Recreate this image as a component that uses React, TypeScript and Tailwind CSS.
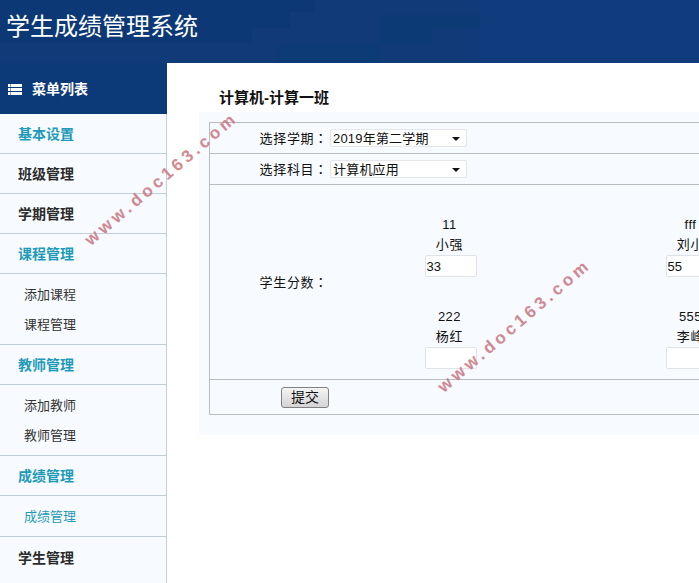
function Top({ label, active, last }: { label: string; active?: boolean; last?: boolean }) {
  return (
    <div className={`h-10 flex items-center pl-[18px] pt-[2px] text-[14px] font-bold ${last ? "" : "border-b border-[#bfd0da]"} ${active ? "text-[#1f9ab8]" : "text-[#2b2b2b]"}`}>
      {label}
    </div>
  );
}

function Sub({ label, active }: { label: string; active?: boolean }) {
  return (
    <div className={`h-[30px] flex items-center pl-6 text-[13px] ${active ? "text-[#1f9ab8]" : "text-[#333333]"}`}>
      {label}
    </div>
  );
}

function Student({ id, name, value }: { id: string; name: string; value?: string }) {
  return (
    <div className="w-[241px] flex flex-col items-center text-[13px] text-[#111111]">
      <div className="h-5 leading-5 tracking-[0.5px]">{id}</div>
      <div className="h-5 leading-5 tracking-[0.7px]">{name}</div>
      <input
        readOnly
        value={value ?? ""}
        className="w-[52px] h-[22px] ml-[2px] bg-white border border-[#dfe3e8] rounded-[2px] px-[1px] text-[13px] text-[#111111] outline-none font-['Liberation_Sans',sans-serif]"
      />
    </div>
  );
}

function Pick({ value }: { value: string }) {
  return (
    <div className="relative w-[137px] h-[18px] bg-white border border-[#e3e6ea] rounded-[2px] pl-[2px] text-[13px] leading-[17px] text-[#111111] tracking-[0.2px]">
      {value}
      <svg className="absolute right-[6px] top-[7px]" width="8" height="4" viewBox="0 0 8 4">
        <path d="M0 0H8L4 4Z" fill="#111111" />
      </svg>
    </div>
  );
}

function Label({ text, width }: { text: string; width: string }) {
  return (
    <div className={`${width} shrink-0 text-right tracking-[0.7px]`}>
      {text}
      <span className="font-['Noto_Sans_CJK_TC',sans-serif]">：</span>
    </div>
  );
}

function Mark({ className }: { className: string }) {
  return (
    <div className={`absolute whitespace-nowrap text-[17px] font-bold tracking-[3.8px] text-[#c9767f] opacity-85 rotate-[-40.5deg] ${className}`}>
      www.doc163.com
    </div>
  );
}

function MenuIcon() {
  return (
    <svg width="14" height="11" viewBox="0 0 14 11" fill="currentColor">
      <rect x="0" y="0" width="2.5" height="3" />
      <rect x="3" y="0" width="11" height="3" />
      <rect x="0" y="4" width="2.5" height="3" />
      <rect x="3" y="4" width="11" height="3" />
      <rect x="0" y="8" width="2.5" height="3" />
      <rect x="3" y="8" width="11" height="3" />
    </svg>
  );
}

export default function App() {
  return (
    <div className="relative w-[699px] h-[583px] overflow-hidden bg-white font-['Liberation_Sans','Noto_Sans_CJK_SC',sans-serif]">
      <div className="relative h-[63px] overflow-hidden flex items-center pl-[6px] pb-[10px] bg-[#103a78] text-white text-[24px]">
        <div className="absolute left-0 top-0 w-[315px] h-3 bg-[#0c3976]" />
        <div className="absolute left-0 top-3 w-[290px] h-4 bg-[#0c3976]" />
        <div className="absolute left-0 top-7 w-[252px] h-[15px] bg-[#0c3976]" />
        <div className="absolute left-[380px] top-[15px] w-[100px] h-[13px] bg-[#0c3a75]" />
        <div className="absolute left-[380px] top-7 w-[52px] h-[15px] bg-[#0c3a75]" />
        <div className="absolute left-[277px] top-[45px] w-[103px] h-[18px] bg-[#0d3b75]" />
        <div className="absolute left-[480px] top-0 w-[219px] h-[63px] bg-[#103c7d]" />
        <span className="relative">学生成绩管理系统</span>
      </div>
      <div className="flex h-[520px]">
        <div className="w-[167px] shrink-0 bg-[#f7fbff] border-r border-[#bfd0da]">
          <div className="h-[51px] flex items-center gap-[10px] pl-2 pt-[2px] bg-[#0c3a78] text-white text-[14px] font-bold -mr-px">
            <MenuIcon />
            菜单列表
          </div>
          <Top label="基本设置" active />
          <Top label="班级管理" />
          <Top label="学期管理" />
          <Top label="课程管理" active />
          <div className="h-[71px] pt-[6px] border-b border-[#bfd0da]">
            <Sub label="添加课程" />
            <Sub label="课程管理" />
          </div>
          <Top label="教师管理" active />
          <div className="h-[71px] pt-[6px] border-b border-[#bfd0da]">
            <Sub label="添加教师" />
            <Sub label="教师管理" />
          </div>
          <Top label="成绩管理" active />
          <div className="h-[41px] pt-[6px] border-b border-[#bfd0da]">
            <Sub label="成绩管理" active />
          </div>
          <Top label="学生管理" last />
        </div>
        <div className="flex-1 min-w-0 pl-8 pt-[25px]">
          <div className="h-6 pl-5 text-[15px] leading-5 font-bold text-[#111111]">计算机-计算一班</div>
          <div className="w-[600px] h-[323px] bg-[#f7faff] pl-[10px] pt-[10px]">
            <div className="w-[590px] h-[293px] border border-[#b9bdc2] flex flex-col text-[13px] text-[#111111]">
              <div className="h-[31px] flex items-center border-b border-[#b9bdc2]">
                <Label text="选择学期" width="w-[118px]" />
                <div className="ml-[2px]"><Pick value="2019年第二学期" /></div>
              </div>
              <div className="h-[31px] flex items-center border-b border-[#b9bdc2]">
                <Label text="选择科目" width="w-[118px]" />
                <div className="ml-[2px]"><Pick value="计算机应用" /></div>
              </div>
              <div className="h-[195px] flex items-center border-b border-[#b9bdc2]">
                <Label text="学生分数" width="w-[118px]" />
                <div className="flex flex-col gap-[30px] self-start pt-[30px] ml-px shrink-0">
                  <div className="flex">
                    <Student id="11" name="小强" value="33" />
                    <Student id="fff" name="刘小" value="55" />
                  </div>
                  <div className="flex">
                    <Student id="222" name="杨红" />
                    <Student id="555" name="李峰" />
                  </div>
                </div>
              </div>
              <div className="flex-1 flex items-center pl-[71px]">
                <button className="w-12 h-[21px] bg-gradient-to-b from-[#f4f4f4] to-[#d4d4d4] border border-[#808080] rounded-[3px] text-[14px] leading-none text-[#111111]">
                  提交
                </button>
              </div>
            </div>
          </div>
        </div>
      </div>
      <Mark className="left-[64px] top-[166px]" />
      <Mark className="left-[417px] top-[313px]" />
    </div>
  );
}
